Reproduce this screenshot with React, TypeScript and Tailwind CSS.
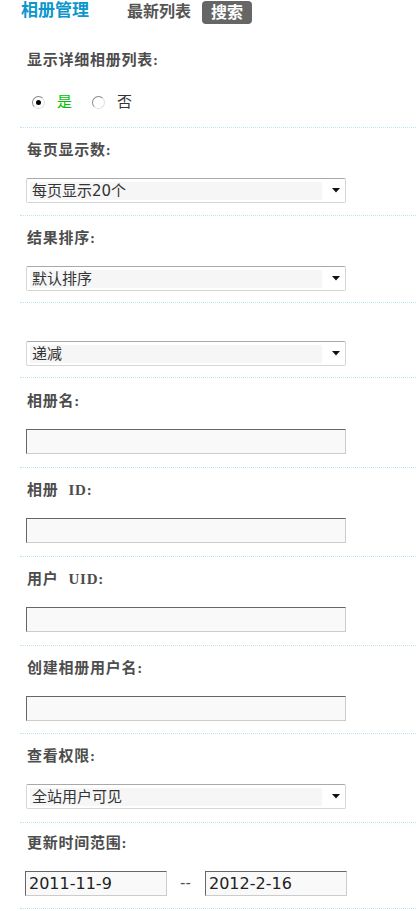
import type { ReactNode } from 'react'

const cjk = { fontFamily: '"Liberation Serif", "Noto Sans CJK SC", serif' }
const ui = { fontFamily: '"DejaVu Sans", "Noto Sans CJK SC", sans-serif' }

function Section({ label, children, className = 'pt-[12px] pb-[12px]' }: { label?: ReactNode; children: ReactNode; className?: string }) {
  return (
    <div className={`border-t border-dotted border-[#c6e2f3] pl-[6px] ${className}`}>
      {label && (
        <div className="h-[20px] leading-[20px] pl-[1px] text-[15px] tracking-[0.75px] font-bold text-[#4d4d4d]" style={cjk}>
          {label}
        </div>
      )}
      <div className={label ? 'mt-[18px]' : ''}>{children}</div>
    </div>
  )
}

function FakeSelect({ value }: { value: string }) {
  return (
    <div className="w-[320px] h-[25px] flex items-center border border-[#d6d6d6] border-t-[#a9a9a9] rounded-[2px] bg-white">
      <div className="ml-[3px] w-[292px] h-[18px] leading-[18px] bg-[#f6f6f6] pl-[2px] text-[15px] text-[#333]" style={ui}>
        {value}
      </div>
      <svg width="8" height="5" viewBox="0 0 8 5" className="ml-[10px]">
        <polygon points="0,0 8,0 4,4.5" fill="#111" />
      </svg>
    </div>
  )
}

function TextBox({ value = '', w = 'w-[320px]' }: { value?: string; w?: string }) {
  return (
    <div
      className={`${w} h-[25px] leading-[23px] border border-t-[#666] border-l-[#666] border-r-[#ccc] border-b-[#ccc] bg-[#f9f9f9] pl-[3px] text-[16px] text-[#222]`}
      style={ui}
    >
      {value}
    </div>
  )
}

function Radio({ checked }: { checked?: boolean }) {
  return (
    <span className="w-[13px] h-[13px] rounded-full border border-[#8a8a8a] border-r-[#dedede] border-b-[#dedede] bg-white flex items-center justify-center">
      {checked && <span className="w-[5px] h-[5px] rounded-full bg-black" />}
    </span>
  )
}

export default function App() {
  return (
    <div className="w-[416px] bg-white min-h-[911px]">
      {/* 顶部标签 */}
      <div className="h-[36px] flex items-start pl-[21px]" style={cjk}>
        <span className="text-[17px] leading-[22px] font-bold text-[#0b96cc]">相册管理</span>
        <span className="ml-[38px] mt-[1px] text-[16px] leading-[22px] font-bold text-[#555]">最新列表</span>
        <span className="ml-[11px] mt-[1px] h-[23px] w-[50px] rounded-[4px] bg-[#666] text-white text-[16px] leading-[23px] font-bold text-center">
          搜索
        </span>
      </div>

      <div className="ml-[20px]">
        {/* 显示详细相册列表 */}
        <div className="pl-[6px] pt-[14px] pb-[12px]">
          <div className="h-[20px] leading-[20px] pl-[1px] text-[15px] tracking-[0.75px] font-bold text-[#4d4d4d]" style={cjk}>
            显示详细相册列表:
          </div>
          <div className="mt-[20px] h-[25px] flex items-center text-[15px]" style={ui}>
            <span className="ml-[6px]"><Radio checked /></span>
            <span className="ml-[12px] text-[#00c000]">是</span>
            <span className="ml-[20px]"><Radio /></span>
            <span className="ml-[12px] text-[#333]">否</span>
          </div>
        </div>

        <Section label="每页显示数:">
          <FakeSelect value="每页显示20个" />
        </Section>

        <Section label="结果排序:" className="pt-[12px] pb-[11px]">
          <FakeSelect value="默认排序" />
        </Section>

        <Section className="pt-[38px] pb-[11px]">
          <FakeSelect value="递减" />
        </Section>

        <Section label="相册名:" className="pt-[13px] pb-[13px]">
          <TextBox />
        </Section>

        <Section label={<>相册<span className="ml-[10px]">ID:</span></>} className="pt-[12px] pb-[13px]">
          <TextBox />
        </Section>

        <Section label={<>用户<span className="ml-[10px]">UID:</span></>} className="pt-[12px] pb-[13px]">
          <TextBox />
        </Section>

        <Section label="创建相册用户名:">
          <TextBox />
        </Section>

        <Section label="查看权限:" className="pt-[12px] pb-[13px]">
          <FakeSelect value="全站用户可见" />
        </Section>

        <Section label="更新时间范围:" className="pt-[10px] pb-[12px]">
          <div className="flex items-center -ml-[1px] mt-[2px]">
            <TextBox value="2011-11-9" w="w-[142px]" />
            <span className="ml-[13px] w-[25px] text-[15px] text-[#555]" style={ui}>--</span>
            <TextBox value="2012-2-16" w="w-[142px]" />
          </div>
        </Section>

        <div className="border-t border-dotted border-[#c6e2f3]" />
      </div>
    </div>
  )
}
